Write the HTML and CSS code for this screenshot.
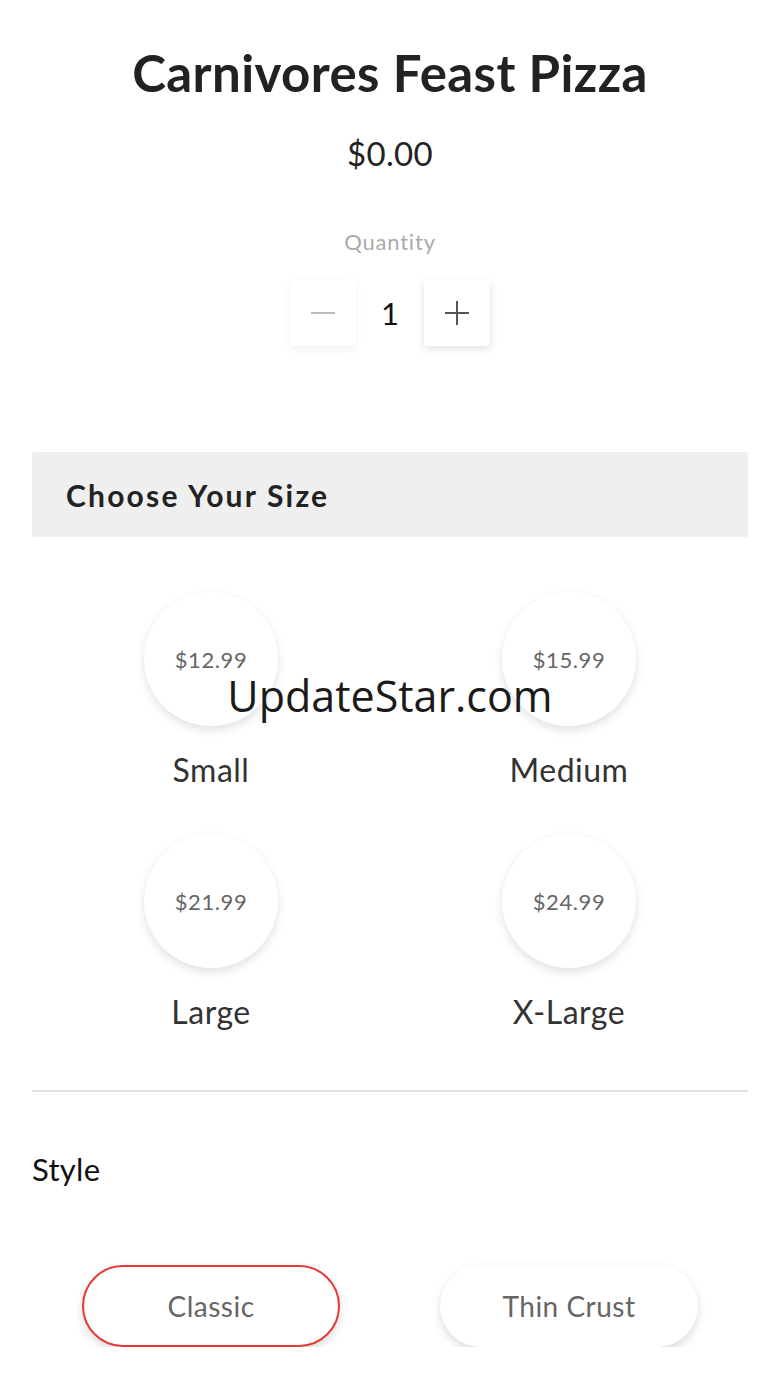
FILE: index.html
```html
<!DOCTYPE html>
<html lang="en">
<head>
  <meta charset="utf-8" />
  <title>Carnivores Feast Pizza</title>
  <link rel="stylesheet" href="styles.css">
</head>
<body>
  <div class="page">
    <h1 class="title">Carnivores Feast Pizza</h1>
    <div class="price">$0.00</div>

    <div class="qty-label">Quantity</div>
    <div class="qty">
      <button class="qty-btn minus" aria-label="decrease">
        <svg width="26" height="26" viewBox="0 0 26 26"><path d="M1 13h24" stroke="#bdbdbd" stroke-width="2"/></svg>
      </button>
      <span class="qty-value">1</span>
      <button class="qty-btn plus" aria-label="increase">
        <svg width="26" height="26" viewBox="0 0 26 26"><path d="M1 13h24M13 1v24" stroke="#555" stroke-width="2"/></svg>
      </button>
    </div>

    <div class="section-head">Choose Your Size</div>

    <div class="sizes">
      <div class="size">
        <div class="size-circle">$12.99</div>
        <div class="size-name">Small</div>
      </div>
      <div class="size">
        <div class="size-circle">$15.99</div>
        <div class="size-name">Medium</div>
      </div>
      <div class="size">
        <div class="size-circle">$21.99</div>
        <div class="size-name">Large</div>
      </div>
      <div class="size">
        <div class="size-circle">$24.99</div>
        <div class="size-name">X-Large</div>
      </div>
      <div class="watermark">UpdateStar.com</div>
    </div>

    <hr class="divider">

    <div class="style-label">Style</div>
    <div class="styles">
      <div class="style-cell"><button class="pill selected">Classic</button></div>
      <div class="style-cell"><button class="pill">Thin Crust</button></div>
    </div>
  </div>
</body>
</html>
```

FILE: styles.css
```css
/* base */
body {
  margin: 0;
  padding: 0;
  background: #fff;
  font-family: Lato, "Open Sans", sans-serif;
  color: #222;
}
.page {
  padding: 0 32px;
}
/* header: name + price */
.title {
  margin: 0;
  padding-top: 44px;
  text-align: center;
  font-size: 51px;
  font-weight: 700;
  line-height: 58px;
  color: #222;
  letter-spacing: 0.4px;
}
.price {
  margin-top: 31px;
  text-align: center;
  font-size: 33px;
  line-height: 40px;
  color: #222;
  letter-spacing: 0.3px;
}
/* quantity stepper */
.qty-label {
  margin-top: 57px;
  text-align: center;
  font-size: 22px;
  line-height: 24px;
  color: #aaa;
  letter-spacing: 0.8px;
}
.qty {
  display: flex;
  justify-content: center;
  align-items: center;
  margin-top: 26px;
}
.qty-btn {
  width: 66px;
  height: 66px;
  border: none;
  border-radius: 3px;
  background: #fff;
  box-shadow: 0 3px 8px rgba(0, 0, 0, 0.12);
  display: flex;
  align-items: center;
  justify-content: center;
  padding: 0;
}
.qty-btn.minus {
  box-shadow: 0 3px 8px rgba(0, 0, 0, 0.06);
}
.qty-value {
  width: 68px;
  text-align: center;
  font-size: 31px;
  color: #111;
}
/* grey section bar */
.section-head {
  margin-top: 106px;
  height: 85px;
  display: flex;
  align-items: center;
  padding-left: 34px;
  background: #efefef;
  border-radius: 2px;
  font-size: 30px;
  font-weight: 700;
  letter-spacing: 2.2px;
  color: #222;
}
/* size choices */
.sizes {
  position: relative;
  display: grid;
  grid-template-columns: 1fr 1fr;
  row-gap: 46px;
  padding-top: 55px;
  padding-bottom: 60px;
}
.size {
  display: flex;
  flex-direction: column;
  align-items: center;
}
.size-circle {
  width: 134px;
  height: 134px;
  border-radius: 50%;
  background: #fff;
  box-shadow: 0 4px 10px rgba(0, 0, 0, 0.12);
  display: flex;
  align-items: center;
  justify-content: center;
  font-size: 22px;
  letter-spacing: 0.6px;
  color: #666;
}
.size-name {
  margin-top: 26px;
  font-size: 32px;
  line-height: 36px;
  letter-spacing: 0.5px;
  color: #333;
}
.watermark {
  position: absolute;
  left: 0;
  right: 0;
  top: 129px;
  text-align: center;
  font-family: "Open Sans", "Noto Sans", sans-serif;
  font-size: 43px;
  color: #1a1a1a;
  pointer-events: none;
}
.divider {
  margin: 0;
  border: none;
  border-top: 2px solid #e2e2e2;
}
/* style choices */
.style-label {
  margin-top: 59px;
  font-size: 31px;
  line-height: 36px;
  letter-spacing: 0.3px;
  color: #111;
}
.styles {
  display: grid;
  grid-template-columns: 1fr 1fr;
  margin-top: 78px;
}
.style-cell {
  display: flex;
  justify-content: center;
}
.pill {
  width: 258px;
  height: 82px;
  border-radius: 41px;
  border: 2px solid transparent;
  background: #fff;
  box-shadow: 0 4px 10px rgba(0, 0, 0, 0.14);
  font-family: Lato, "Open Sans", sans-serif;
  font-size: 28px;
  letter-spacing: 0.5px;
  color: #666;
}
.pill.selected {
  border-color: #e53935;
}
```
